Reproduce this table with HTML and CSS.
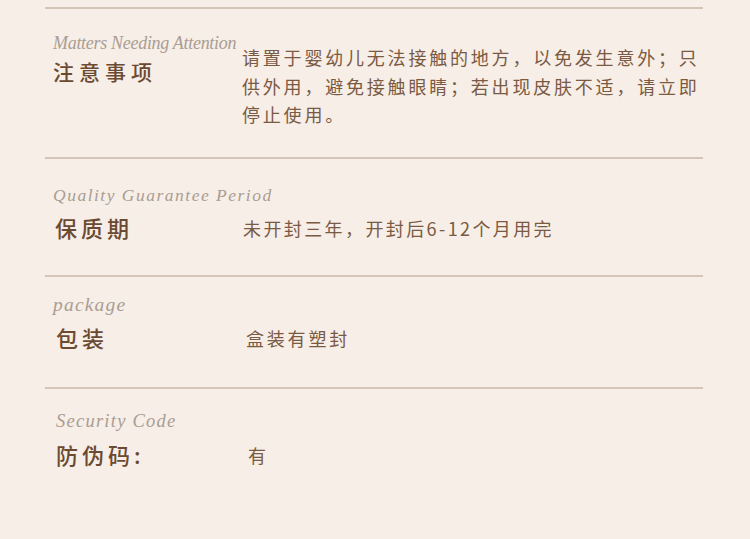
FILE: index.html
```html
<!DOCTYPE html>
<html lang="zh-CN">
<head>
  <meta charset="UTF-8" />
  <meta name="viewport" content="width=device-width, initial-scale=1.0" />
  <title>产品信息</title>
  <link rel="stylesheet" href="styles.css">
</head>
<body>
  <div class="info-list">
    <div class="item item-notice">
      <div class="label">
        <p class="label-en">Matters Needing Attention</p>
        <h3 class="label-cn">注意事项</h3>
      </div>
      <p class="value">请置于婴幼儿无法接触的地方，以免发生意外；只供外用，避免接触眼睛；若出现皮肤不适，请立即停止使用。</p>
    </div>

    <div class="item item-period">
      <div class="label">
        <p class="label-en">Quality Guarantee Period</p>
        <h3 class="label-cn">保质期</h3>
      </div>
      <p class="value">未开封三年，开封后6-12个月用完</p>
    </div>

    <div class="item item-package">
      <div class="label">
        <p class="label-en">package</p>
        <h3 class="label-cn">包装</h3>
      </div>
      <p class="value">盒装有塑封</p>
    </div>

    <div class="item item-code">
      <div class="label">
        <p class="label-en">Security Code</p>
        <h3 class="label-cn">防伪码:</h3>
      </div>
      <p class="value">有</p>
    </div>
  </div>
</body>
</html>
```

FILE: styles.css
```css
* {
  margin: 0;
  padding: 0;
  box-sizing: border-box;
}
body {
  background: #f6eee7;
  font-family: "Noto Sans CJK SC", "Noto Sans", sans-serif;
  padding: 7px 47px 0 45px;
}
.item {
  display: flex;
  align-items: flex-start;
  border-top: 2px solid #d5c5b6;
  padding-left: 8px;
}
.label {
  width: 189px;
  flex-shrink: 0;
}
.label-en {
  font-family: "Liberation Serif", serif;
  font-style: italic;
  font-size: 17.5px;
  line-height: 20px;
  letter-spacing: 1.5px;
  white-space: nowrap;
  color: #aa9d92;
}
.label-cn {
  font-size: 22px;
  font-weight: 500;
  line-height: 30px;
  letter-spacing: 4px;
  color: #6c4a31;
  margin-top: 7px;
}
.value {
  font-size: 18px;
  line-height: 28.5px;
  letter-spacing: 2.4px;
  color: #7b5a43;
  margin-top: 29px;
}

/* row specifics */
.item-notice {
  height: 150px;
  padding-top: 24px;
}
.item-notice .label-en {
  font-size: 18px;
  letter-spacing: -0.3px;
}
.item-notice .label-cn {
  font-size: 21px;
  letter-spacing: 5px;
  margin-top: 3px;
}
.item-notice .value {
  letter-spacing: 2.8px;
  margin-top: 10px;
}
.item-period {
  height: 118px;
  padding-top: 26px;
}
.item-period .label-cn {
  padding-left: 2px;
}
.item-period .value {
  padding-left: 1px;
}
.item-package {
  height: 112px;
  padding-top: 18px;
}
.item-package .label-en {
  font-size: 19.5px;
  letter-spacing: 1.2px;
}
.item-package .label-cn {
  padding-left: 3px;
}
.item-package .value {
  padding-left: 4px;
  letter-spacing: 2.8px;
}
.item-code {
  height: 151px;
  padding-top: 22px;
  padding-left: 11px;
}
.item-code .label-en {
  font-size: 18.5px;
  letter-spacing: 1.25px;
}
.item-code .label-cn {
  margin-top: 8px;
}
.item-code .value {
  padding-left: 3px;
  margin-top: 30px;
}
```
